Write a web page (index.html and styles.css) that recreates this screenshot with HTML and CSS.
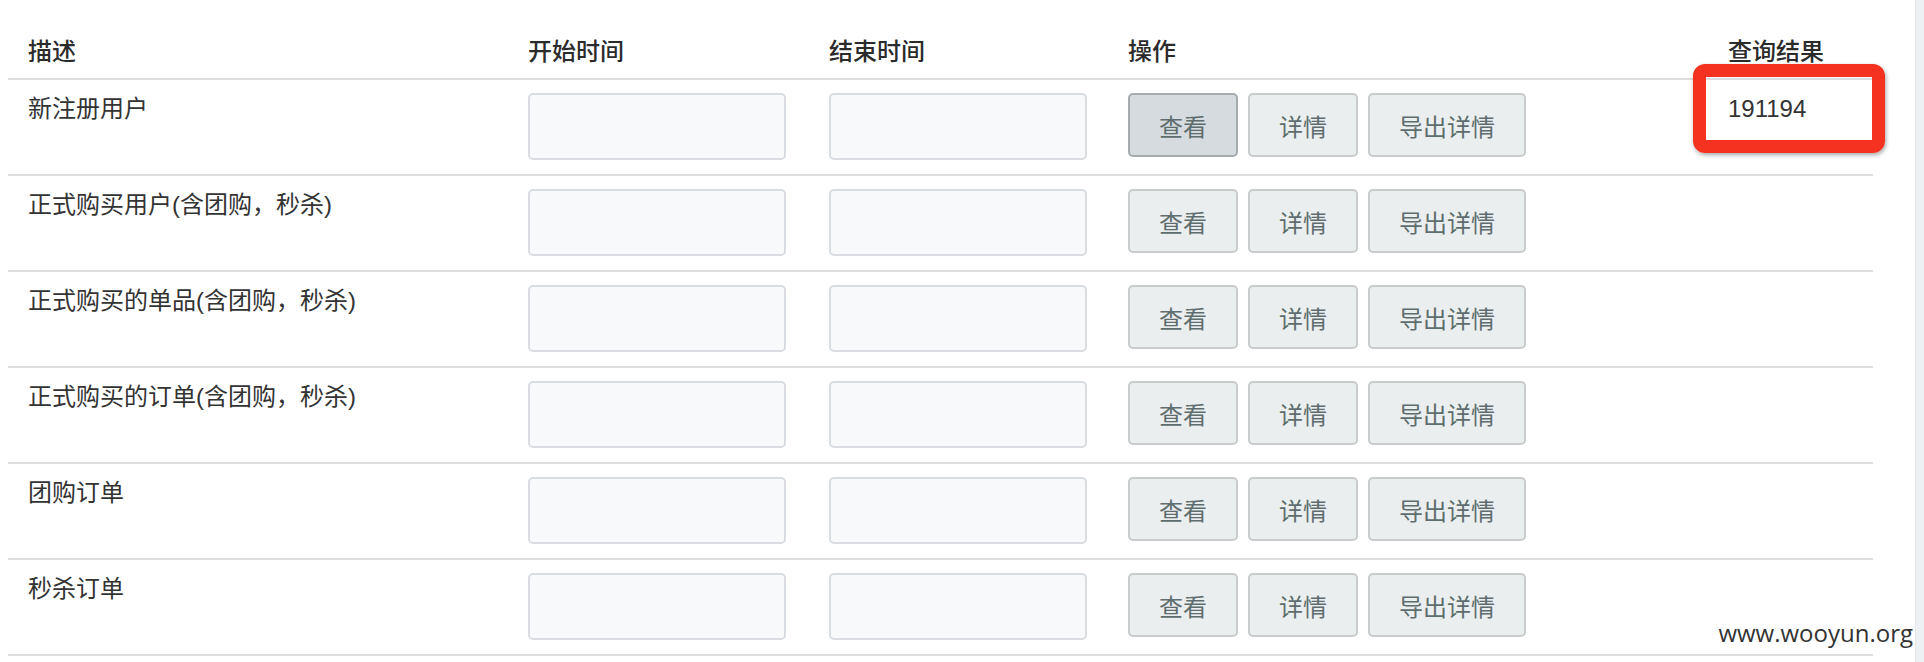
FILE: index.html
```html
<!DOCTYPE html>
<html lang="zh-CN">
<head>
    <meta charset="UTF-8">
    <meta name="viewport" content="width=device-width, initial-scale=1.0">
    <title>数据查询</title>
    <link rel="stylesheet" href="styles.css">
</head>
<body>
    <div class="page">
        <div class="main">
            <table class="stats-table">
                <colgroup>
                    <col class="col-desc">
                    <col class="col-start">
                    <col class="col-end">
                    <col class="col-ops">
                    <col class="col-result">
                </colgroup>
                <thead>
                    <tr>
                        <th>描述</th>
                        <th>开始时间</th>
                        <th>结束时间</th>
                        <th>操作</th>
                        <th>查询结果</th>
                    </tr>
                </thead>
                <tbody>
                    <tr>
                        <td>新注册用户</td>
                        <td><input type="text" class="date-input"></td>
                        <td><input type="text" class="date-input"></td>
                        <td>
                            <div class="btn-group">
                                <button class="btn active">查看</button>
                                <button class="btn">详情</button>
                                <button class="btn">导出详情</button>
                            </div>
                        </td>
                        <td class="result">191194</td>
                    </tr>
                    <tr>
                        <td>正式购买用户(含团购，秒杀)</td>
                        <td><input type="text" class="date-input"></td>
                        <td><input type="text" class="date-input"></td>
                        <td>
                            <div class="btn-group">
                                <button class="btn">查看</button>
                                <button class="btn">详情</button>
                                <button class="btn">导出详情</button>
                            </div>
                        </td>
                        <td class="result"></td>
                    </tr>
                    <tr>
                        <td>正式购买的单品(含团购，秒杀)</td>
                        <td><input type="text" class="date-input"></td>
                        <td><input type="text" class="date-input"></td>
                        <td>
                            <div class="btn-group">
                                <button class="btn">查看</button>
                                <button class="btn">详情</button>
                                <button class="btn">导出详情</button>
                            </div>
                        </td>
                        <td class="result"></td>
                    </tr>
                    <tr>
                        <td>正式购买的订单(含团购，秒杀)</td>
                        <td><input type="text" class="date-input"></td>
                        <td><input type="text" class="date-input"></td>
                        <td>
                            <div class="btn-group">
                                <button class="btn">查看</button>
                                <button class="btn">详情</button>
                                <button class="btn">导出详情</button>
                            </div>
                        </td>
                        <td class="result"></td>
                    </tr>
                    <tr>
                        <td>团购订单</td>
                        <td><input type="text" class="date-input"></td>
                        <td><input type="text" class="date-input"></td>
                        <td>
                            <div class="btn-group">
                                <button class="btn">查看</button>
                                <button class="btn">详情</button>
                                <button class="btn">导出详情</button>
                            </div>
                        </td>
                        <td class="result"></td>
                    </tr>
                    <tr>
                        <td>秒杀订单</td>
                        <td><input type="text" class="date-input"></td>
                        <td><input type="text" class="date-input"></td>
                        <td>
                            <div class="btn-group">
                                <button class="btn">查看</button>
                                <button class="btn">详情</button>
                                <button class="btn">导出详情</button>
                            </div>
                        </td>
                        <td class="result"></td>
                    </tr>
                </tbody>
            </table>
        </div>
        <div class="scroll-strip"></div>

        <!-- annotation box drawn over the result cell -->
        <div class="highlight-box"></div>
        <div class="watermark">www.wooyun.org</div>
    </div>
</body>
</html>
```

FILE: styles.css
```css
body {
    margin: 0;
    background-color: #ffffff;
    color: #333333;
    font-family: "Liberation Sans", "Noto Sans CJK SC", sans-serif;
    font-size: 24px;
}
.page {
    position: relative;
    display: flex;
    height: 662px;
    overflow: hidden;
}
.main {
    flex: 1;
    padding: 24px 0 0 8px;
}
.scroll-strip {
    width: 8px;
    background-color: #eef1f4;
    border-left: 1px solid #e3e6ea;
}
.stats-table {
    width: 1865px;
    border-collapse: collapse;
    table-layout: fixed;
}
.col-desc {
    width: 500px;
}
.col-start {
    width: 301px;
}
.col-end {
    width: 299px;
}
.col-ops {
    width: 600px;
}
.col-result {
    width: 165px;
}
.stats-table th {
    text-align: left;
    font-weight: 500;
    line-height: 32px;
    padding: 12px 20px 10px;
    border-bottom: 2px solid #dedede;
    color: #2b2b2b;
}
.stats-table td {
    vertical-align: top;
    line-height: 32px;
    padding: 13px 20px 14px;
    border-bottom: 2px solid #dedede;
    color: #333333;
}
.date-input {
    display: block;
    box-sizing: border-box;
    width: 258px;
    height: 67px;
    margin: 0;
    border: 2px solid #d9dce0;
    border-radius: 5px;
    background-color: #f8f9fb;
}
.btn-group {
    display: flex;
    gap: 10px;
}
.btn {
    box-sizing: border-box;
    height: 64px;
    padding: 0 29px;
    border: 2px solid #c8cccd;
    border-radius: 5px;
    background-color: #ebeeef;
    color: #5e6d6d;
    font-family: "Liberation Sans", "Noto Sans CJK SC", sans-serif;
    font-size: 24px;
    cursor: pointer;
}
.btn.active {
    background-color: #d5dbde;
    border-color: #a6acae;
}
.result {
    color: #222222;
}
.highlight-box {
    position: absolute;
    left: 1693px;
    top: 64px;
    width: 192px;
    height: 89px;
    box-sizing: border-box;
    border: 13px solid #f4321f;
    border-radius: 12px;
    box-shadow: 1px 2px 4px rgba(0, 0, 0, 0.35);
}
.watermark {
    position: absolute;
    right: 11px;
    top: 616px;
    font-family: "Open Sans", sans-serif;
    font-size: 24px;
    line-height: 34px;
    color: #333333;
}
```
